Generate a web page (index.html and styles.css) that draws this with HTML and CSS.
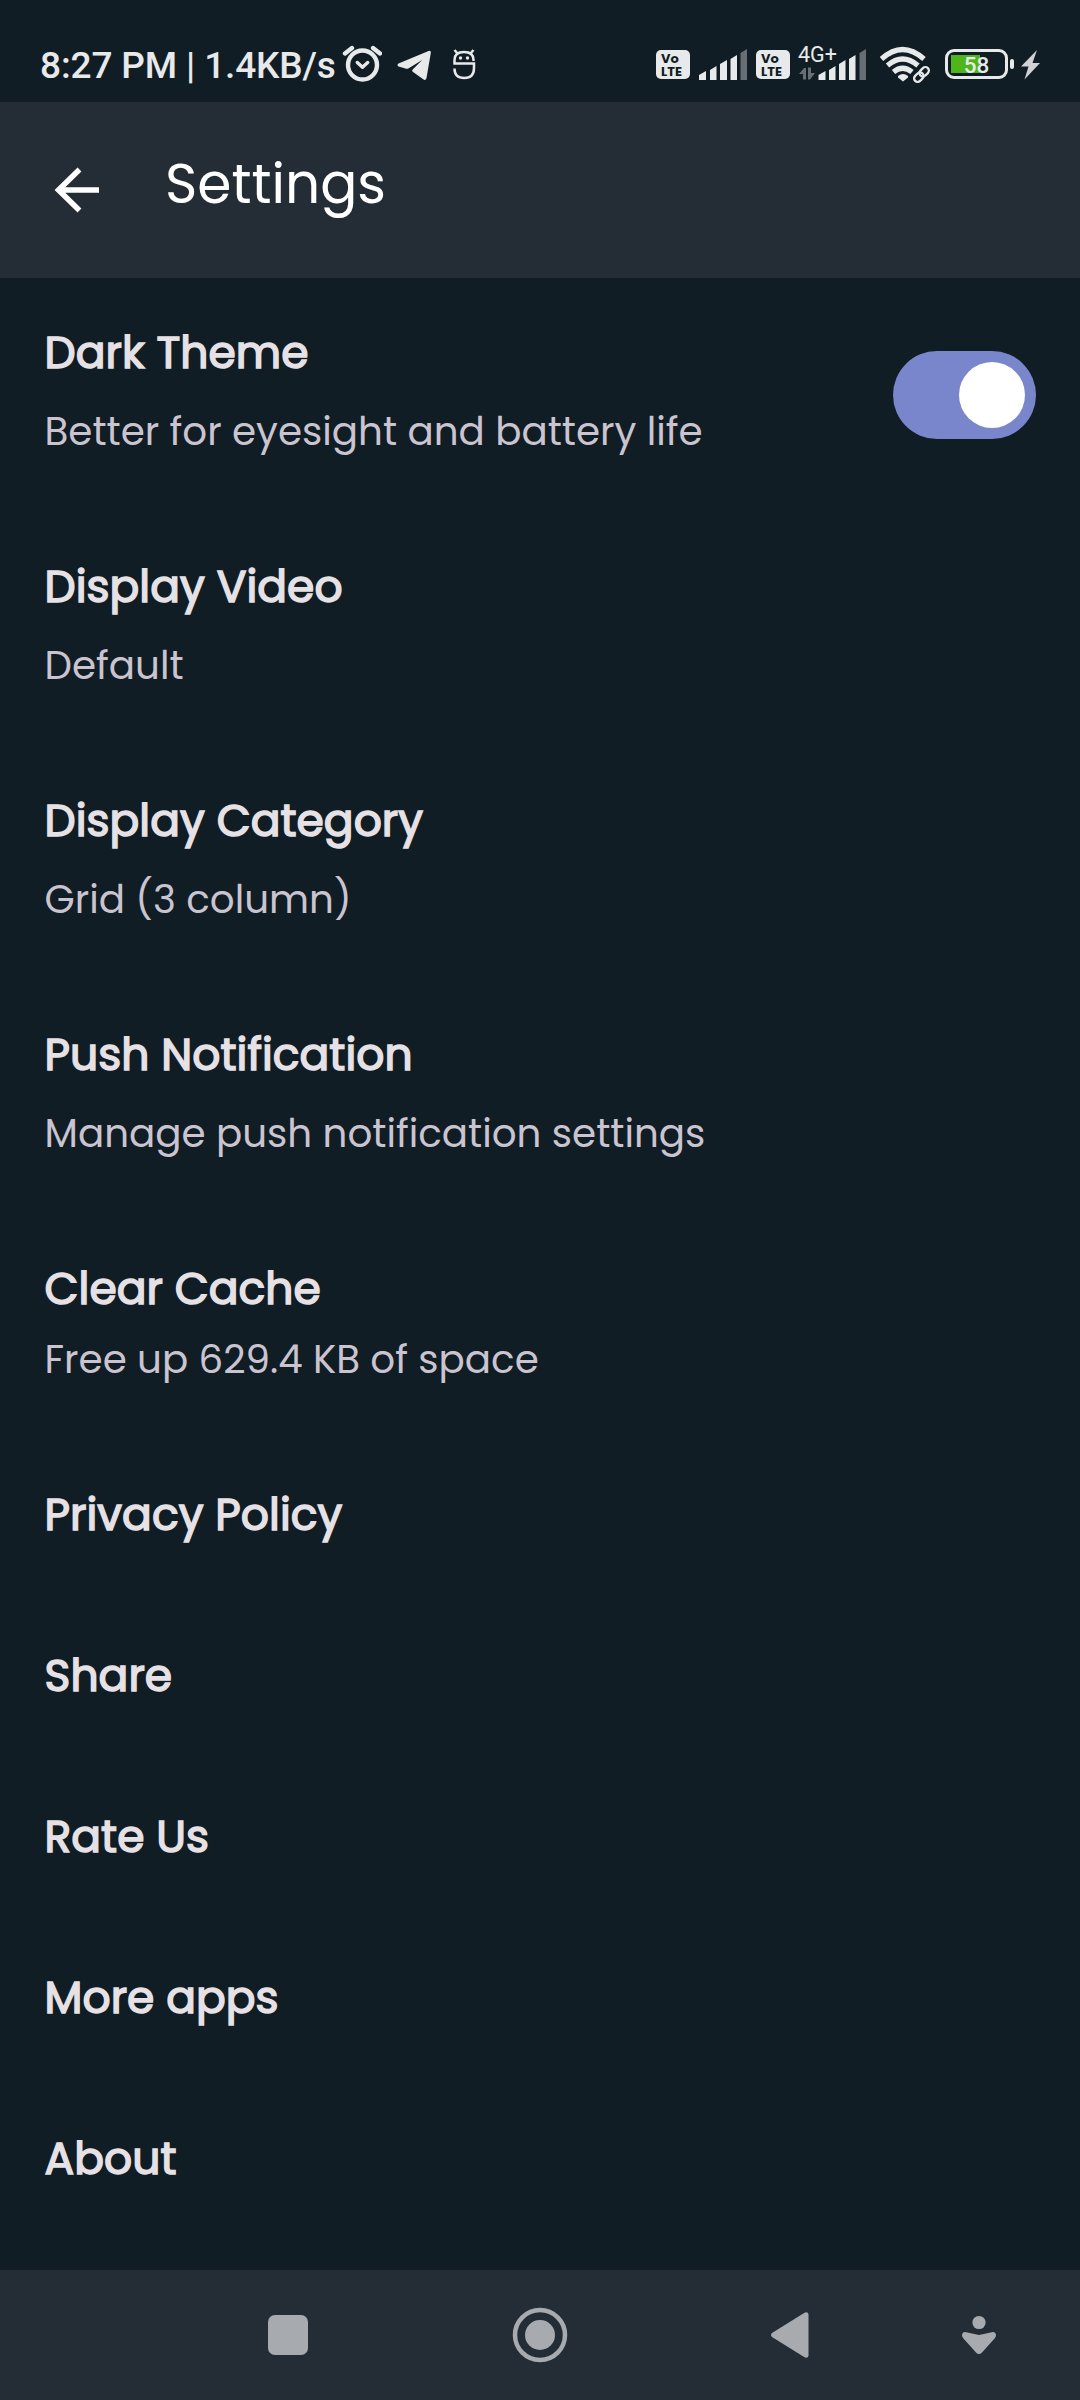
FILE: index.html
```html
<!DOCTYPE html>
<html lang="en">
<head>
<meta charset="utf-8">
<title>Settings</title>
<link rel="stylesheet" href="styles.css">
</head>
<body>
<header class="status-bar">
  <div class="status-left">
    <span class="clock">8:27 PM | 1.4KB/s</span>
    <svg class="icon alarm" width="40" height="40" viewBox="342 44 40 40"><circle cx="362.5" cy="65" r="14.5" fill="none" stroke="currentColor" stroke-width="4.400"/><path d="M345 53.500l7-5.500M380 53.500l-7-5.500" stroke="currentColor" stroke-width="4.400" stroke-linecap="round"/><path d="M357.300 62.500l5.200 4.800 5.200-4.800" fill="none" stroke="currentColor" stroke-width="3.400" stroke-linecap="round" stroke-linejoin="round"/></svg>
    <svg class="icon telegram" width="36" height="40" viewBox="396 44 36 40"><path d="M398.500 63.500L428.500 51q2.700-.8 2.300 2l-4.300 25q-.8 3-3.300 1.300l-10.500-7.500q-1.200-1 0-2.200l9.500-9.600-13.500 8.200q-1.700 1-3.200.4l-7-2.200q-2-1.200 0-2.900z" fill="currentColor"/></svg>
    <svg class="icon cleaner" width="24" height="40" viewBox="452 44 24 40"><path d="M454.500 64.500V60q0-8 9.500-8t9.500 8v1M453.500 63.500H474v4.500q0 10-9.800 10t-9.700-9.500M454.500 50l3.500 4M473.500 50l-3.500 4" fill="none" stroke="currentColor" stroke-width="2.500"/><circle cx="460.500" cy="58" r="1.700" fill="currentColor"/><circle cx="467.500" cy="58" r="1.700" fill="currentColor"/></svg>
  </div>
  <div class="status-right">
    <span class="volte"><span>Vo</span><span>LTE</span></span>
    <svg class="icon signal" width="50" height="40" viewBox="698 44 50 40"><path d="M699 75l7-4v9h-7zM710 70l6.500-4v14H710zM720 64l7-4v20h-7zM730.500 59l6.500-4v25h-6.500z" fill="currentColor"/><path d="M740.500 53l6.500-4v31h-6.500z" fill="#686f74"/></svg>
    <span class="volte volte-second"><span>Vo</span><span>LTE</span></span>
    <div class="network">
      <span class="network-type">4G+</span>
      <svg class="icon" width="72" height="40" viewBox="797 44 72 40"><path d="M799 74l5-6h2v11.500h-3V74zM808 67.500h3V73h4l-5 6.500h-2z" fill="#686f74"/><path d="M818.500 75l7-4v9h-7zM829 70l6.500-4v14H829zM839 64l6.500-4v20H839zM849 59l6.500-4v25H849z" fill="currentColor"/><path d="M859.500 53l6.500-4v31h-6.500z" fill="#686f74"/></svg>
    </div>
    <svg class="icon wifi" width="52" height="40" viewBox="879 44 52 40"><path d="M881.500 59q21-19 42.500 0M887.500 65.500q15-13 30.500 0M893.500 72q9-7.500 18.500 0" fill="none" stroke="currentColor" stroke-width="5.200"/><path d="M898 76q5-4 10 0v1.500l-5 4-5-4z" fill="currentColor"/><g transform="translate(921.500 74.500) rotate(-45)" fill="none" stroke="#111d24" stroke-width="6"><rect x="-9" y="-3.500" width="10" height="7" rx="3.500"/><rect x="-1" y="-3.500" width="10" height="7" rx="3.500"/></g><g transform="translate(921.500 74.500) rotate(-45)" fill="none" stroke="currentColor" stroke-width="2.300"><rect x="-9" y="-3.500" width="10.500" height="7" rx="3.500"/><rect x="-1.500" y="-3.500" width="10.500" height="7" rx="3.500"/></g></svg>
    <div class="battery"><span class="battery-level">58</span></div>
    <svg class="icon bolt" width="20" height="40" viewBox="1021 44 20 40"><path d="M1037 50l-16 16.500h7.500L1024.500 79.500 1040 63h-7.500z" fill="#cfd1d3"/></svg>
  </div>
</header>
<div class="app-bar">
  <svg class="back" width="46" height="46" viewBox="54 167 46 46"><path d="M99 190H58M79.500 169.500L58.500 190l21 20.500" fill="none" stroke="#fff" stroke-width="5.500"/></svg>
  <h1 class="app-title">Settings</h1>
</div>
<main class="settings">
  <section class="row"><div><h2 class="title">Dark Theme</h2><p class="summary">Better for eyesight and battery life</p></div><div class="switch"><span class="thumb"></span></div></section>
  <section class="row"><div><h2 class="title">Display Video</h2><p class="summary">Default</p></div></section>
  <section class="row"><div><h2 class="title">Display Category</h2><p class="summary">Grid (3 column)</p></div></section>
  <section class="row"><div><h2 class="title">Push Notification</h2><p class="summary">Manage push notification settings</p></div></section>
  <section class="row row-cache"><div><h2 class="title">Clear Cache</h2><p class="summary">Free up 629.4 KB of space</p></div></section>
  <section class="row"><h2 class="title">Privacy Policy</h2></section>
  <section class="row"><h2 class="title">Share</h2></section>
  <section class="row"><h2 class="title">Rate Us</h2></section>
  <section class="row"><h2 class="title">More apps</h2></section>
  <section class="row"><h2 class="title">About</h2></section>
</main>
<nav class="nav-bar">
  <svg class="nav-recent" width="40" height="40" viewBox="0 0 40 40"><rect width="40" height="40" rx="7"/></svg>
  <svg class="nav-home" width="56" height="56" viewBox="0 0 56 56"><circle cx="28" cy="28" r="25" fill="none" stroke="#a7abb0" stroke-width="4.500"/><circle cx="28" cy="28" r="15"/></svg>
  <svg class="nav-back" width="38" height="46" viewBox="0 0 38 46"><path d="M1 21L33.500.7Q37-.8 37.500 2.500v41q-.5 3.300-4 1.800L1 25q-2-2 0-4z"/></svg>
  <svg class="nav-hide" width="36" height="40" viewBox="0 0 36 40"><circle cx="18" cy="7.500" r="6.600"/><path d="M4 17L18 20l14-3q2.500 0 3 3 0 1.500-1 3L21 37.500q-3 3-6 0L2 23q-1-1.500-1-3 .5-3 3-3z"/></svg>
</nav>
</body>
</html>
```
FILE: styles.css
```css
* { box-sizing: border-box; margin: 0; padding: 0; }
body {
  width: 1080px; height: 2400px; overflow: hidden;
  display: flex; flex-direction: column;
  background: #111d24; color: #e6e1e5;
  font-family: Poppins, Inter, sans-serif;
}
svg { display: block; flex: none; }
.status-bar { height: 102px; display: flex; justify-content: space-between; align-items: flex-start; padding: 44px 39px 0 40px; color: #e7e9ea; font-family: Roboto, sans-serif; }
.status-left, .status-right { display: flex; align-items: flex-start; }
.clock { width: 302px; font-size: 37px; font-weight: 500; line-height: 44px; letter-spacing: -0.14px; white-space: nowrap; }
.telegram { margin-left: 14px; }
.cleaner { margin-left: 20px; }
.volte { width: 34px; height: 29px; margin-top: 6px; padding: 2px 0 0 5px; border-radius: 5px; background: #e7e9ea; color: #111d24; font: 700 13px/13px Poppins, Inter, sans-serif; display: flex; flex-direction: column; }
.signal { margin-left: 8px; }
.volte-second { margin-left: 8px; }
.network { position: relative; margin-left: 7px; }
.network-type { position: absolute; left: 1px; top: 1px; font-size: 21.5px; line-height: 20px; }
.wifi { margin-left: 10px; }
.battery { position: relative; width: 63px; height: 30px; margin: 5px 13px 0 14px; border: 3px solid #e7e9ea; border-radius: 9px; background: linear-gradient(#4eb51b, #4eb51b) 3px 3px / 29px 18px no-repeat; }
.battery::after { content: ""; position: absolute; left: 62px; top: 7px; width: 4px; height: 10px; border-radius: 2px; background: #e7e9ea; }
.battery-level { display: block; text-align: center; font-size: 22.5px; font-weight: 500; line-height: 26px; }
.app-bar { height: 176px; display: flex; align-items: flex-start; background: #242d35; padding: 65px 0 0 54px; }
.app-title { margin: -18px 0 0 65px; font-size: 55px; font-weight: 400; line-height: 70px; color: #fff; white-space: nowrap; }
.settings { height: 1992px; }
.row { display: flex; justify-content: space-between; padding: 40px 44px 52px 44.5px; }
.title { font-size: 44px; font-weight: 400; line-height: 69px; letter-spacing: 0.05px; white-space: nowrap; -webkit-text-stroke: 1.5px currentColor; }
.summary { margin: 16px 0 -1px; font-size: 38.85px; line-height: 58px; color: #cac4d0; white-space: nowrap; }
.row-cache .summary { margin-top: 8px; }
.switch { width: 143px; height: 88px; margin-top: 33px; border-radius: 44px; background: #7986cb; padding: 11px; display: flex; justify-content: flex-end; }
.thumb { width: 66px; height: 66px; border-radius: 50%; background: #fff; }
.nav-bar { height: 130px; display: flex; align-items: center; background: #242d35; fill: #a7abb0; padding-left: 268px; }
.nav-home { margin-left: 204px; }
.nav-back { margin-left: 203px; }
.nav-hide { margin-left: 152px; }
```
